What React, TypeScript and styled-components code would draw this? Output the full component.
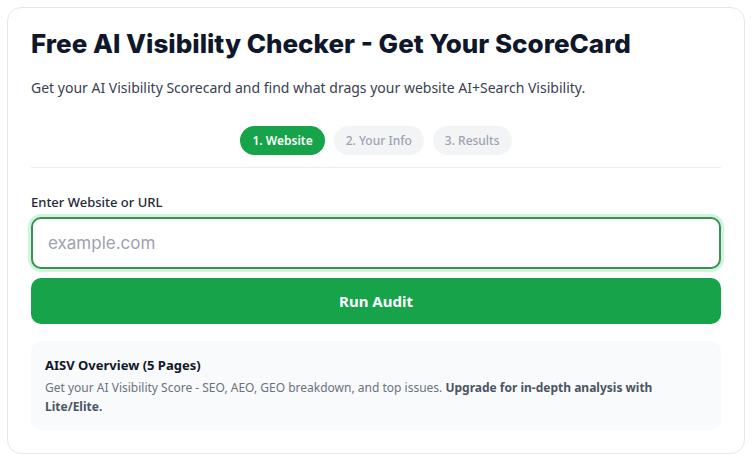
import React from "react";
import styled, { createGlobalStyle } from "styled-components";

const Global = createGlobalStyle`
  html, body { margin: 0; padding: 0; background: #ffffff; }
  body { font-family: "Noto Sans", "Open Sans", sans-serif; }
  * { box-sizing: border-box; }
`;

const Page = styled.div`
  padding: 7px;
`;

const Card = styled.section`
  border: 1px solid #e5e7eb;
  border-radius: 14px;
  background: #ffffff;
  padding: 20px 23px 23px;
`;

const Title = styled.h1`
  margin: 0;
  font-family: Inter, "Noto Sans", sans-serif;
  font-weight: 800;
  font-size: 26px;
  line-height: 31px;
  color: #0f172a;
`;

const Subtitle = styled.p`
  margin: 18px 0 0;
  font-size: 14px;
  line-height: 22px;
  color: #374151;
`;

const Steps = styled.nav`
  display: flex;
  justify-content: center;
  gap: 9px;
  margin-top: 27px;
  padding-bottom: 12px;
  border-bottom: 1px solid #eceef1;
`;

const Step = styled.span<{ $active?: boolean }>`
  display: inline-flex;
  align-items: center;
  height: 29px;
  padding: 0 12px;
  border-radius: 999px;
  font-size: 12px;
  font-weight: ${(p) => (p.$active ? 600 : 500)};
  background: ${(p) => (p.$active ? "#16a34a" : "#f3f4f6")};
  color: ${(p) => (p.$active ? "#ffffff" : "#9ca3af")};
`;

const Label = styled.label`
  display: block;
  margin-top: 24px;
  font-size: 13px;
  line-height: 20px;
  font-weight: 500;
  color: #1f2937;
`;

const Input = styled.input`
  display: block;
  width: 100%;
  height: 52px;
  margin-top: 5px;
  padding: 0 15px;
  border: 2px solid #3d8f55;
  border-radius: 10px;
  box-shadow: 0 0 0 3px #d1f5dc;
  font-family: Inter, "Noto Sans", sans-serif;
  font-size: 17px;
  color: #111827;
  outline: none;
  &::placeholder { color: #9ca3af; }
`;

const Button = styled.button`
  display: block;
  width: 100%;
  height: 46px;
  margin-top: 9px;
  border: none;
  border-radius: 10px;
  background: #16a34a;
  color: #ffffff;
  font-family: "Noto Sans", sans-serif;
  font-weight: 700;
  font-size: 15px;
  cursor: pointer;
`;

const Info = styled.div`
  margin-top: 17px;
  padding: 14px 14px 14px;
  border-radius: 10px;
  background: #f8fafc;
`;

const InfoTitle = styled.h3`
  margin: 0;
  font-size: 13px;
  line-height: 20px;
  font-weight: 700;
  color: #111827;
`;

const InfoText = styled.p`
  margin: 3px 0 0;
  font-size: 12px;
  line-height: 19px;
  color: #6b7280;
  strong { color: #4b5563; font-weight: 700; }
`;

export default function App() {
  return (
    <>
      <Global />
      <Page>
        <Card>
          <Title>Free AI Visibility Checker - Get Your ScoreCard</Title>
          <Subtitle>
            Get your AI Visibility Scorecard and find what drags your website AI+Search Visibility.
          </Subtitle>
          <Steps>
            <Step $active>1. Website</Step>
            <Step>2. Your Info</Step>
            <Step>3. Results</Step>
          </Steps>
          <Label htmlFor="url">Enter Website or URL</Label>
          <Input id="url" placeholder="example.com" />
          <Button>Run Audit</Button>
          <Info>
            <InfoTitle>AISV Overview (5 Pages)</InfoTitle>
            <InfoText>
              Get your AI Visibility Score - SEO, AEO, GEO breakdown, and top issues.{" "}
              <strong>Upgrade for in-depth analysis with Lite/Elite.</strong>
            </InfoText>
          </Info>
        </Card>
      </Page>
    </>
  );
}
